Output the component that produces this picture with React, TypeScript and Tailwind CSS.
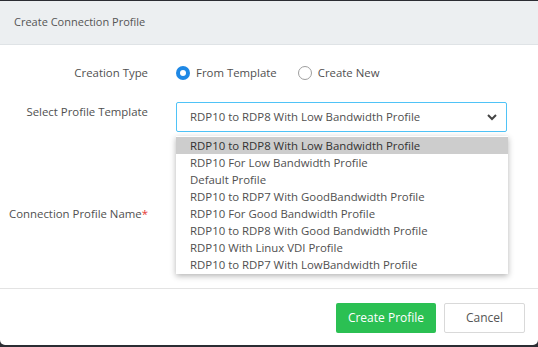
import React from 'react';

const templates = [
  'RDP10 to RDP8 With Low Bandwidth Profile',
  'RDP10 For Low Bandwidth Profile',
  'Default Profile',
  'RDP10 to RDP7 With GoodBandwidth Profile',
  'RDP10 For Good Bandwidth Profile',
  'RDP10 to RDP8 With Good Bandwidth Profile',
  'RDP10 With Linux VDI Profile',
  'RDP10 to RDP7 With LowBandwidth Profile',
];

const Radio: React.FC<{ checked?: boolean; label: string }> = ({ checked, label }) => (
  <label className="flex items-center gap-[6px] cursor-pointer">
    {checked ? (
      <span className="w-[14px] h-[14px] rounded-full bg-[#1e88e5] flex items-center justify-center">
        <span className="w-[6px] h-[6px] rounded-full bg-white"></span>
      </span>
    ) : (
      <span className="w-[14px] h-[14px] rounded-full border border-[#9e9e9e] bg-white"></span>
    )}
    <span>{label}</span>
  </label>
);

const App: React.FC = () => {
  return (
    <div className="w-[538px] h-[347px] bg-[#2b2d33] pt-px" style={{ fontFamily: '"Open Sans", sans-serif' }}>
      <div className="h-[344px] bg-white rounded-b-[5px] flex flex-col text-[11.4px] text-[#505050]">
        <div className="h-[44px] bg-[#eceff1] border-b border-[#dfe3e6] flex items-center px-[14px] text-[11px] text-[#555]">
          Create Connection Profile
        </div>

        <div className="flex-1 flex flex-col pt-[18px] border-b border-[#e3e3e3]">
          <div className="flex items-center h-[20px]">
            <div className="w-[148px] text-right">Creation Type</div>
            <div className="ml-[28px] flex items-center gap-[21px]">
              <Radio checked label="From Template" />
              <Radio label="Create New" />
            </div>
          </div>

          <div className="flex items-start mt-[19px]">
            <div className="w-[148px] text-right pt-[1px]">Select Profile Template</div>
            <div className="ml-[28px] relative">
              <div className="w-[331px] h-[30px] border border-[#4fc3f7] rounded-[2px] flex items-center justify-between pl-[13px] pr-[8px]">
                <span>RDP10 to RDP8 With Low Bandwidth Profile</span>
                <svg width="12" height="12" viewBox="0 0 12 12" fill="none" stroke="#444" strokeWidth="2">
                  <path d="M2 4l4 4 4-4" />
                </svg>
              </div>
              <ul className="absolute z-10 left-0 top-[34px] w-[332px] bg-white shadow-[0_2px_6px_rgba(0,0,0,0.3)] py-px">
                {templates.map((t, i) => (
                  <li
                    key={i}
                    className={`h-[17px] leading-[17px] pl-[14px] ${i === 0 ? 'bg-[#cdcdcd] text-[#333]' : ''}`}
                  >
                    {t}
                  </li>
                ))}
              </ul>
            </div>
          </div>

          <div className="flex items-center mt-[67px]">
            <div className="w-[148px] text-right">
              Connection Profile Name<span className="text-[#e53935]">*</span>
            </div>
            <div className="ml-[28px]">
              <div className="w-[331px] h-[30px] border border-[#d5d5d5] rounded-[2px]"></div>
            </div>
          </div>
        </div>

        <div className="h-[56px] flex items-center justify-end gap-[8px] pr-[13px] pt-[2px]">
          <button className="h-[30px] w-[100px] bg-[#2bc053] text-white text-[12px] rounded-[2px]">
            Create Profile
          </button>
          <button className="h-[30px] w-[81px] bg-white border border-[#d9d9d9] text-[#555] text-[12px] rounded-[2px]">
            Cancel
          </button>
        </div>
      </div>
    </div>
  );
};

export default App;
